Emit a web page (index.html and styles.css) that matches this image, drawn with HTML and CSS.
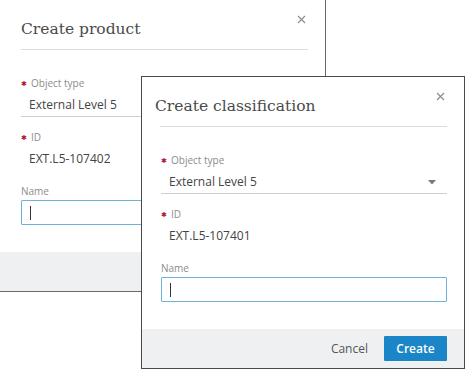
FILE: index.html
```html
<!DOCTYPE html>
<html lang="en">
<head>
    <meta charset="UTF-8">
    <meta name="viewport" content="width=device-width, initial-scale=1.0">
    <title>Create classification</title>
    <link rel="stylesheet" href="styles.css">
</head>
<body>
    <!-- Dialog behind -->
    <div class="dialog dialog-back">
        <div class="dialog-header">
            <h2 class="dialog-title">Create product</h2>
            <span class="dialog-close">
                <svg width="9" height="9" viewBox="0 0 9 9"><path d="M1 1L8 8M8 1L1 8" stroke="#8a8a8a" stroke-width="1.1"/></svg>
            </span>
        </div>
        <div class="dialog-body">
            <label class="field-label required">Object type</label>
            <div class="select">External Level 5</div>
            <label class="field-label required gap">ID</label>
            <div class="field-value">EXT.L5-107402</div>
            <label class="field-label name">Name</label>
            <div class="input"><span class="caret"></span></div>
        </div>
        <div class="dialog-footer"></div>
    </div>

    <!-- Dialog in front -->
    <div class="dialog dialog-front">
        <div class="dialog-header">
            <h2 class="dialog-title">Create classification</h2>
            <span class="dialog-close">
                <svg width="9" height="9" viewBox="0 0 9 9"><path d="M1 1L8 8M8 1L1 8" stroke="#8a8a8a" stroke-width="1.1"/></svg>
            </span>
        </div>
        <div class="dialog-body">
            <label class="field-label required">Object type</label>
            <div class="select">
                External Level 5
                <svg class="select-arrow" width="8" height="5" viewBox="0 0 8 5"><path d="M0 0H8L4 4.5Z" fill="#7a7a7a"/></svg>
            </div>
            <label class="field-label required gap">ID</label>
            <div class="field-value">EXT.L5-107401</div>
            <label class="field-label name">Name</label>
            <div class="input"><span class="caret"></span></div>
        </div>
        <div class="dialog-footer">
            <button class="btn-cancel">Cancel</button>
            <button class="btn-create">Create</button>
        </div>
    </div>
</body>
</html>
```

FILE: styles.css
```css
/* Base styles */
* {
    margin: 0;
    padding: 0;
    box-sizing: border-box;
}

body {
    font-family: 'Open Sans', 'Noto Sans', Arial, sans-serif;
    background-color: #fff;
    color: #444;
    width: 474px;
    height: 389px;
    position: relative;
    overflow: hidden;
}

/* Dialogs */
.dialog {
    position: absolute;
    width: 324px;
    background-color: #fff;
    border: 1px solid #4a4a4a;
    display: flex;
    flex-direction: column;
}

.dialog-back {
    left: 0;
    top: -1px;
    border-left: 0;
    width: 326px;
    border-color: #6a6a6a;
}

.dialog-back .dialog-header {
    margin-left: 21px;
}

.dialog-back .dialog-body {
    padding-left: 21px;
}

.dialog-front {
    left: 141px;
    top: 76px;
}

/* Header */
.dialog-header {
    position: relative;
    margin: 0 17px 0 18px;
    padding: 19px 0 10px;
    border-bottom: 1px solid #dcdcdc;
}

.dialog-title {
    font-family: 'DejaVu Serif', 'Liberation Serif', serif;
    font-weight: normal;
    font-size: 15.5px;
    line-height: 20px;
    color: #4a4a4a;
}

.dialog-front .dialog-title {
    margin-left: -5px;
}

.dialog-close {
    position: absolute;
    right: 2px;
    top: 15px;
    display: flex;
}

/* Body */
.dialog-body {
    padding: 26px 17px 27px 19px;
    display: flex;
    flex-direction: column;
}

.field-label {
    height: 14px;
    font-size: 10px;
    line-height: 14px;
    color: #8c8c8c;
}

.field-label.required::before {
    content: "\2731";
    display: inline-block;
    line-height: 0;
    vertical-align: 1px;
    color: #b5123a;
    font-size: 7px;
    margin-right: 4px;
}

.field-label.gap {
    margin-top: 13px;
}

.field-label.name {
    margin-top: 17px;
}

.select {
    height: 20px;
    margin-top: 7px;
    padding: 0 11px 0 8px;
    font-size: 12px;
    line-height: 16px;
    color: #444;
    border-bottom: 1px solid #cfcfcf;
    display: flex;
    align-items: flex-start;
    justify-content: space-between;
}

.select-arrow {
    margin-top: 6px;
}

.field-value {
    height: 16px;
    margin-top: 7px;
    padding-left: 8px;
    font-size: 12px;
    line-height: 16px;
    color: #444;
}

.input {
    margin-top: 2px;
    height: 25px;
    border: 1px solid #6fb2d8;
    border-radius: 1px;
    display: flex;
    align-items: center;
    padding-left: 8px;
}

.caret {
    width: 1px;
    height: 14px;
    background-color: #333;
}

/* Footer */
.dialog-footer {
    height: 39px;
    background-color: #eef0f2;
    display: flex;
    align-items: center;
    justify-content: flex-end;
    padding: 0 17px 0 0;
    gap: 16px;
}

.btn-cancel {
    background: none;
    border: none;
    font-family: inherit;
    font-size: 12px;
    color: #555;
}

.btn-create {
    width: 63px;
    height: 25px;
    border: none;
    border-radius: 1px;
    background-color: #1b86c7;
    color: #fff;
    font-family: inherit;
    font-size: 12px;
    font-weight: 600;
}
```
